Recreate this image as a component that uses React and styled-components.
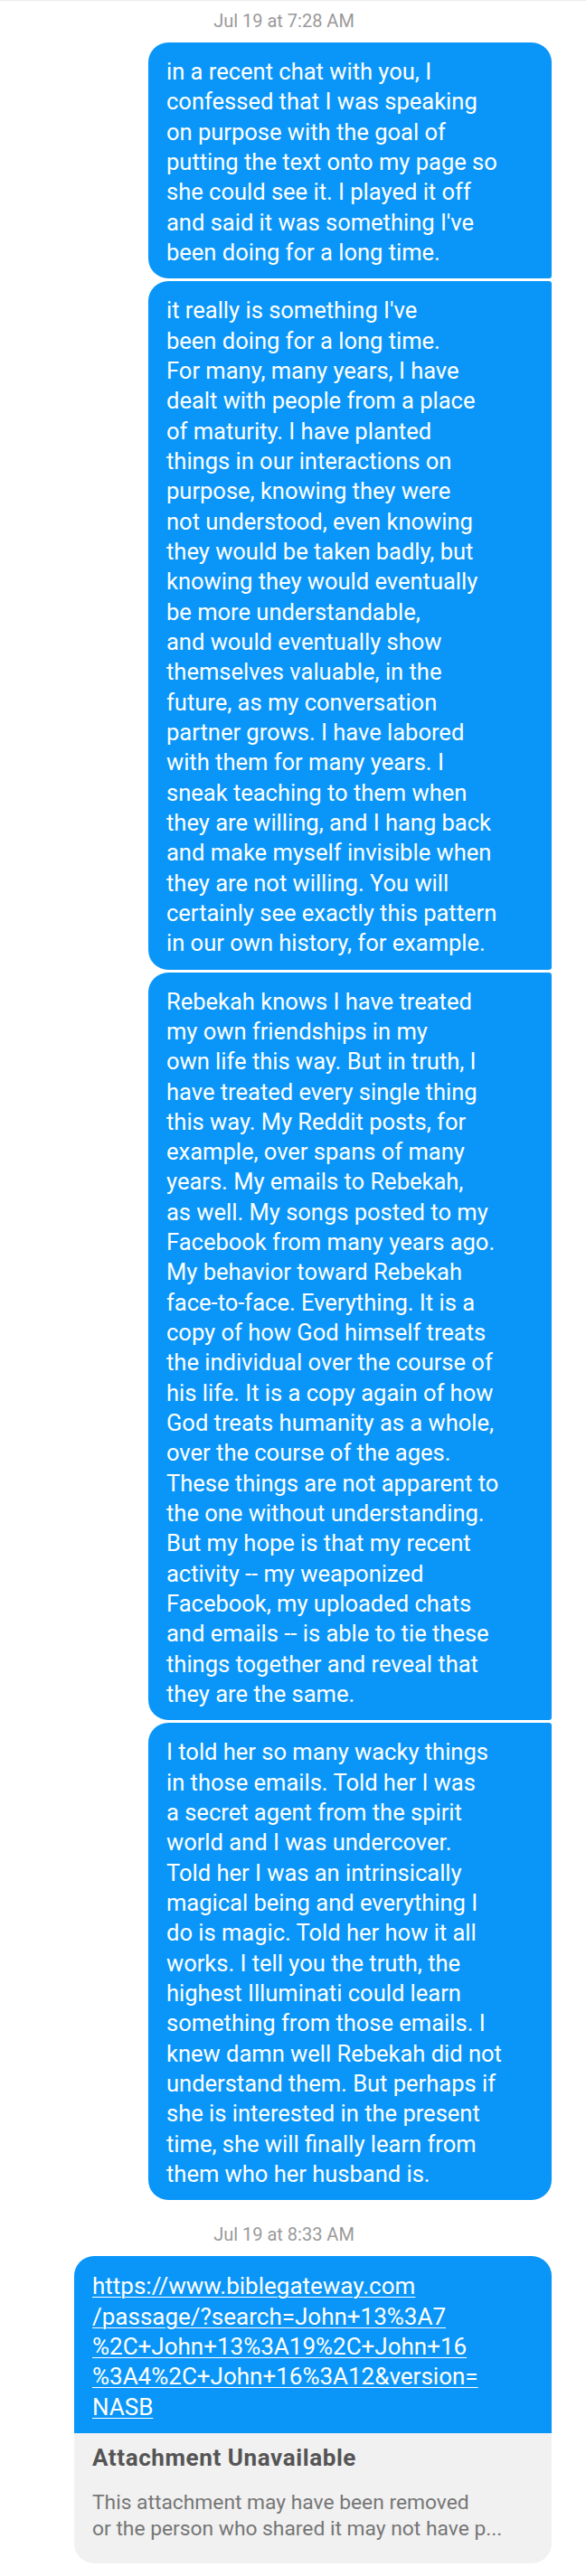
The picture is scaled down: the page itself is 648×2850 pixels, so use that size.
import React from "react";
import styled, { createGlobalStyle } from "styled-components";

const GlobalStyle = createGlobalStyle`
  body {
    margin: 0;
    background: #ffffff;
    font-family: Roboto, "Noto Sans", "Liberation Sans", sans-serif;
  }
`;

const BLUE = "#0a96f8";

const Thread = styled.div`
  display: flex;
  flex-direction: column;
  align-items: flex-end;
  border-top: 1px solid #ececec;
  padding: 0 38px 14px 0;
`;

const Timestamp = styled.div`
  align-self: stretch;
  text-align: center;
  padding-left: 18px;
  margin: ${(p) => p.$top}px 0 12px;
  font-size: 20px;
  line-height: 24px;
  color: #9a9a9a;
`;

const Group = styled.div`
  display: flex;
  flex-direction: column;
  gap: 3px;
  width: ${(p) => p.$width}px;
`;

const Bubble = styled.div`
  background: ${BLUE};
  color: #ffffff;
  padding: 16px 20px 12px;
  font-size: 25.5px;
  line-height: 33.33px;
  border-radius: 22px ${(p) => (p.$first ? 22 : 3)}px
    ${(p) => (p.$last ? 22 : 3)}px 22px;
`;

const Line = styled.span`
  display: block;
  white-space: pre;
`;

const LinkCard = styled.div`
  width: 528px;
  border-radius: 22px;
  overflow: hidden;
`;

const LinkBody = styled.div`
  background: ${BLUE};
  padding: 17px 20px 12px;
  font-size: 26px;
  line-height: 33.33px;
`;

const LinkText = styled.a`
  display: block;
  color: #ffffff;
  text-decoration: underline;
  text-decoration-thickness: 1px;
  text-underline-offset: 3px;
  white-space: pre;
`;

const Attachment = styled.div`
  background: #f1f1f1;
  padding: 12px 20px 24px;
`;

const AttachTitle = styled.div`
  font-size: 26px;
  line-height: 31px;
  font-weight: 700;
  letter-spacing: 0.6px;
  color: #555555;
`;

const AttachDesc = styled.div`
  margin-top: 19px;
  font-size: 22.8px;
  line-height: 29px;
  color: #767676;
`;

const groups = [
  [
    "in a recent chat with you, I",
    "confessed that I was speaking",
    "on purpose with the goal of",
    "putting the text onto my page so",
    "she could see it. I played it off",
    "and said it was something I've",
    "been doing for a long time.",
  ],
  [
    "it really is something I've",
    "been doing for a long time.",
    "For many, many years, I have",
    "dealt with people from a place",
    "of maturity. I have planted",
    "things in our interactions on",
    "purpose, knowing they were",
    "not understood, even knowing",
    "they would be taken badly, but",
    "knowing they would eventually",
    "be more understandable,",
    "and would eventually show",
    "themselves valuable, in the",
    "future, as my conversation",
    "partner grows. I have labored",
    "with them for many years. I",
    "sneak teaching to them when",
    "they are willing, and I hang back",
    "and make myself invisible when",
    "they are not willing. You will",
    "certainly see exactly this pattern",
    "in our own history, for example.",
  ],
  [
    "Rebekah knows I have treated",
    "my own friendships in my",
    "own life this way. But in truth, I",
    "have treated every single thing",
    "this way. My Reddit posts, for",
    "example, over spans of many",
    "years. My emails to Rebekah,",
    "as well. My songs posted to my",
    "Facebook from many years ago.",
    "My behavior toward Rebekah",
    "face-to-face. Everything. It is a",
    "copy of how God himself treats",
    "the individual over the course of",
    "his life. It is a copy again of how",
    "God treats humanity as a whole,",
    "over the course of the ages.",
    "These things are not apparent to",
    "the one without understanding.",
    "But my hope is that my recent",
    "activity -- my weaponized",
    "Facebook, my uploaded chats",
    "and emails -- is able to tie these",
    "things together and reveal that",
    "they are the same.",
  ],
  [
    "I told her so many wacky things",
    "in those emails. Told her I was",
    "a secret agent from the spirit",
    "world and I was undercover.",
    "Told her I was an intrinsically",
    "magical being and everything I",
    "do is magic. Told her how it all",
    "works. I tell you the truth, the",
    "highest Illuminati could learn",
    "something from those emails. I",
    "knew damn well Rebekah did not",
    "understand them. But perhaps if",
    "she is interested in the present",
    "time, she will finally learn from",
    "them who her husband is.",
  ],
];

const linkLines = [
  "https://www.biblegateway.com",
  "/passage/?search=John+13%3A7",
  "%2C+John+13%3A19%2C+John+16",
  "%3A4%2C+John+16%3A12&version=",
  "NASB",
];

const App = () => {
  return (
    <>
      <GlobalStyle />
      <Thread>
        <Timestamp $top={10}>Jul 19 at 7:28 AM</Timestamp>
        <Group $width={446}>
          {groups.map((lines, i) => (
            <Bubble key={i} $first={i === 0} $last={i === groups.length - 1}>
              {lines.map((l, j) => (
                <Line key={j}>{l}</Line>
              ))}
            </Bubble>
          ))}
        </Group>

        <Timestamp $top={26}>Jul 19 at 8:33 AM</Timestamp>
        <LinkCard>
          <LinkBody>
            {linkLines.map((l, i) => (
              <LinkText key={i}>{l}</LinkText>
            ))}
          </LinkBody>
          <Attachment>
            <AttachTitle>Attachment Unavailable</AttachTitle>
            <AttachDesc>
              This attachment may have been removed
              <br />
              or the person who shared it may not have p...
            </AttachDesc>
          </Attachment>
        </LinkCard>
      </Thread>
    </>
  );
};

export default App;
